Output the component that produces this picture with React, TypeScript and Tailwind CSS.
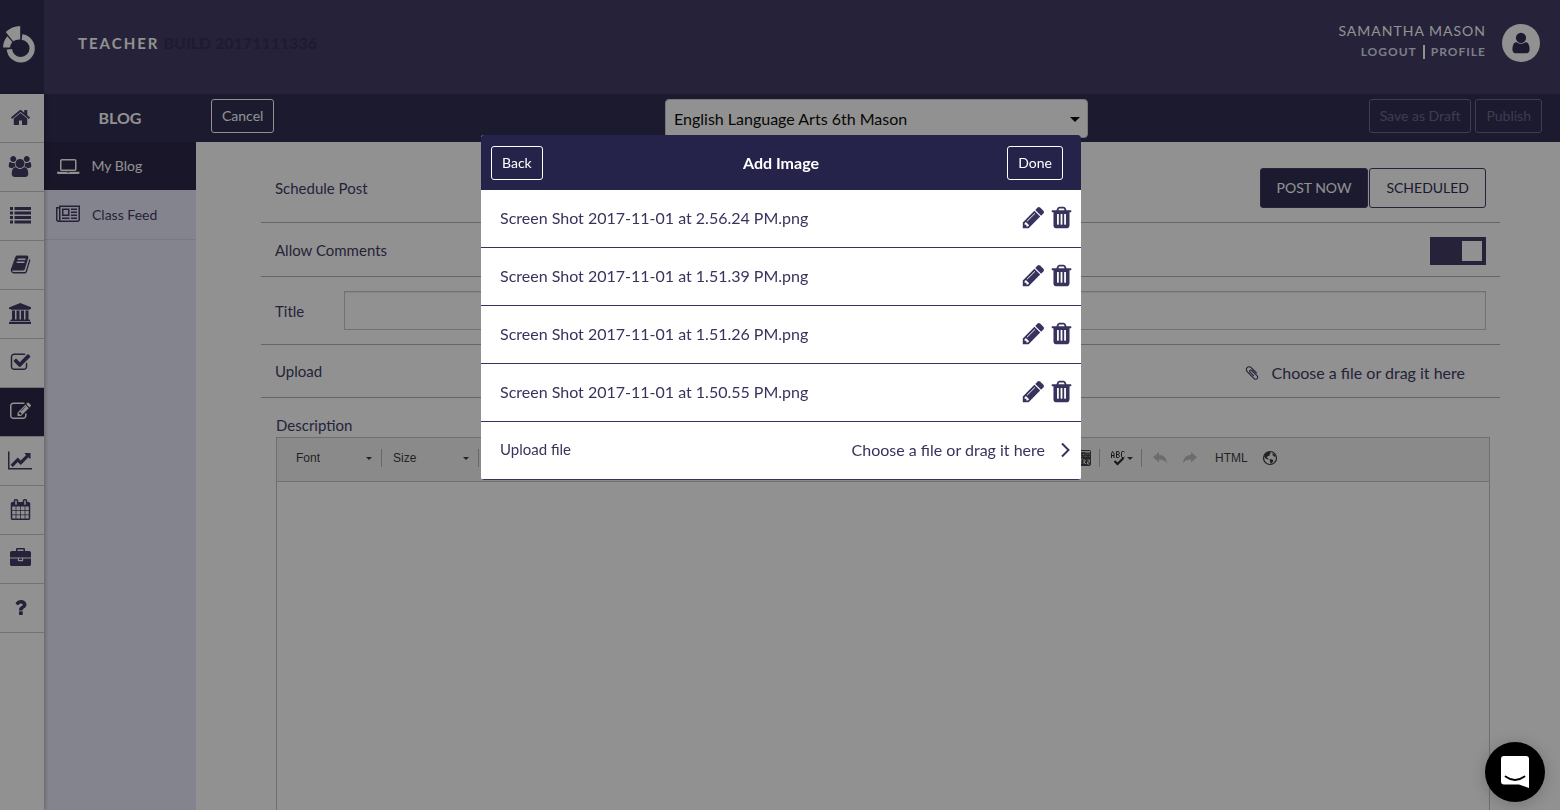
import { useState } from "react";

interface IconShape {
  path: string;
  width?: number;
}

const icons: Record<string, IconShape> = {
  home: {
    path: "M1472 992v480q0 26-19 45t-45 19h-384v-384h-256v384h-384q-26 0-45-19t-19-45v-480q0-1 .5-3t.5-3l575-474 575 474q1 2 1 6zm223-69l-62 74q-8 9-21 11h-3q-13 0-21-7l-692-577-692 577q-12 8-24 7-13-2-21-11l-62-74q-8-10-7-23.5t11-21.5l719-599q32-26 76-26t76 26l244 204v-195q0-14 9-23t23-9h192q14 0 23 9t9 23v408l219 182q10 8 11 21.5t-7 23.5z",
  },
  users: {
    width: 2048,
    path: "M657 896q-162 5-265 128h-134q-82 0-138-40.5t-56-118.5q0-353 124-353 6 0 43.5 21t97.5 42.5 119 21.5q67 0 133-23-5 37-5 66 0 139 81 256zm1071 637q0 120-73 189.5t-194 69.5h-874q-121 0-194-69.5t-73-189.5q0-53 3.5-103.5t14-109 26.5-108.5 43-97.5 62-81 85.5-53.5 111.5-20q10 0 43 21.5t73 48 107 48 135 21.5 135-21.5 107-48 73-48 43-21.5q61 0 111.5 20t85.5 53.5 62 81 43 97.5 26.5 108.5 14 109 3.5 103.5zm-1024-1277q0 106-75 181t-181 75-181-75-75-181 75-181 181-75 181 75 75 181zm704 384q0 159-112.5 271.5t-271.5 112.5-271.5-112.5-112.5-271.5 112.5-271.5 271.5-112.5 271.5 112.5 112.5 271.5zm576 225q0 78-56 118.5t-138 40.5h-134q-103-123-265-128 81-117 81-256 0-29-5-66 66 23 133 23 59 0 119-21.5t97.5-42.5 43.5-21q124 0 124 353zm-128-609q0 106-75 181t-181 75-181-75-75-181 75-181 181-75 181 75 75 181z",
  },
  list: {
    path: "M0 160h256v256h-256zM384 160h1408v256h-1408zM0 544h256v256h-256zM384 544h1408v256h-1408zM0 928h256v256h-256zM384 928h1408v256h-1408zM0 1312h256v256h-256zM384 1312h1408v256h-1408z",
  },
  book: {
    path: "M1703 478q40 57 18 129l-275 906q-19 64-76.5 107.5t-122.5 43.5h-923q-77 0-148.5-53.5t-99.5-131.5q-24-67-2-127 0-4 3-27t4-37q1-8-3-21.5t-3-19.5q2-11 8-21t16.5-23.5 16.5-23.5q23-38 45-91.5t30-91.5q3-10 .5-30t-.5-28q3-11 17-28t17-23q21-36 42-92t25-90q1-9-2.5-32t.5-28q4-13 22-30.5t22-22.5q19-26 42.5-84.5t27.5-96.5q1-8-3-25.5t-2-26.5q2-8 9-18t18-23 17-21q8-12 16.5-30.5t15-35 16-36 19.5-32 26.5-23.5 36-11.5 47.5 5.5l-1 3q38-9 51-9h761q74 0 114 56t18 130l-274 906q-36 119-71.5 153.5t-128.5 34.5h-869q-27 0-38 15-11 16-1 43 24 70 144 70h923q29 0 56-15.5t35-41.5l300-987q7-22 5-57 38 15 59 43zm-1064 2q-4 13 2 22.5t20 9.5h608q13 0 25.5-9.5t16.5-22.5l21-64q4-13-2-22.5t-20-9.5h-608q-13 0-25.5 9.5t-16.5 22.5zm-83 256q-4 13 2 22.5t20 9.5h608q13 0 25.5-9.5t16.5-22.5l21-64q4-13-2-22.5t-20-9.5h-608q-13 0-25.5 9.5t-16.5 22.5z",
  },
  university: {
    width: 1920,
    path: "M960 0l960 384v128h-128q0 26-20.5 45t-48.5 19h-1526q-28 0-48.5-19t-20.5-45h-128v-128zm-704 640h256v768h128v-768h256v768h128v-768h256v768h128v-768h256v768h59q28 0 48.5 19t20.5 45v64h-1664v-64q0-26 20.5-45t48.5-19h59v-768zm1595 960q28 0 48.5 19t20.5 45v128h-1920v-128q0-26 20.5-45t48.5-19h1782z",
  },
  check: {
    path: "M1472 930v318q0 119-84.5 203.5t-203.5 84.5h-832q-119 0-203.5-84.5t-84.5-203.5v-832q0-119 84.5-203.5t203.5-84.5h832q63 0 117 25 15 7 18 23 3 17-9 29l-49 49q-10 10-23 10-3 0-9-2-23-6-45-6h-832q-66 0-113 47t-47 113v832q0 66 47 113t113 47h832q66 0 113-47t47-113v-254q0-13 9-22l64-64q10-10 23-10 6 0 12 3 20 8 20 29zm231-489l-814 814q-24 24-57 24t-57-24l-430-430q-24-24-24-57t24-57l110-110q24-24 57-24t57 24l263 263 647-647q24-24 57-24t57 24l110 110q24 24 24 57t-24 57z",
  },
  edit: {
    path: "M888 1184l116-116-152-152-116 116v56h96v96h56zm440-720q-16-16-33 1l-350 350q-17 17-1 33t33-1l350-350q17-17 1-33zm80 594v190q0 119-84.5 203.5t-203.5 84.5h-832q-119 0-203.5-84.5t-84.5-203.5v-832q0-119 84.5-203.5t203.5-84.5h832q63 0 117 25 15 7 18 23 3 17-9 29l-49 49q-14 14-32 8-23-6-45-6h-832q-66 0-113 47t-47 113v832q0 66 47 113t113 47h832q66 0 113-47t47-113v-126q0-13 9-22l64-64q15-15 35-7t20 29zm-96-738l288 288-672 672h-288v-288zm444 132l-92 92-288-288 92-92q28-28 68-28t68 28l152 152q28 28 28 68t-28 68z",
  },
  chart: {
    width: 2048,
    path: "M2048 1536v128h-2048v-1536h128v1408h1920zm-128-1248v435q0 21-19.5 29.5t-35.5-7.5l-121-121-633 633q-10 10-23 10t-23-10l-233-233-416 416-192-192 585-585q10-10 23-10t23 10l233 233 464-464-121-121q-16-16-7.5-35.5t29.5-19.5h435q14 0 23 9t9 23z",
  },
  calendar: {
    path: "M192 1664h288v-288h-288v288zm352 0h320v-288h-320v288zm-352-352h288v-320h-288v320zm352 0h320v-320h-320v320zm-352-384h288v-288h-288v288zm736 736h320v-288h-320v288zm-384-736h320v-288h-320v288zm768 736h288v-288h-288v288zm-384-352h320v-320h-320v320zm-352-864v-288q0-13-9.5-22.5t-22.5-9.5h-64q-13 0-22.5 9.5t-9.5 22.5v288q0 13 9.5 22.5t22.5 9.5h64q13 0 22.5-9.5t9.5-22.5zm736 864h288v-320h-288v320zm-384-384h320v-288h-320v288zm384 0h288v-288h-288v288zm32-480v-288q0-13-9.5-22.5t-22.5-9.5h-64q-13 0-22.5 9.5t-9.5 22.5v288q0 13 9.5 22.5t22.5 9.5h64q13 0 22.5-9.5t9.5-22.5zm384-64v1280q0 52-38 90t-90 38h-1408q-52 0-90-38t-38-90v-1280q0-52 38-90t90-38h128v-96q0-66 47-113t113-47h64q66 0 113 47t47 113v96h384v-96q0-66 47-113t113-47h64q66 0 113 47t47 113v96h128q52 0 90 38t38 90z",
  },
  briefcase: {
    path: "M640 256h512v-128h-512v128zm1152 640v480q0 66-47 113t-113 47h-1472q-66 0-113-47t-47-113v-480h672v160q0 26 19 45t45 19h320q26 0 45-19t19-45v-160h672zm-768 0v128h-256v-128h256zm768-480v384h-1792v-384q0-66 47-113t113-47h352v-160q0-40 28-68t68-28h576q40 0 68 28t28 68v160h352q66 0 113 47t47 113z",
  },
  question: {
    path: "M1088 1256v240q0 16-12 28t-28 12h-240q-16 0-28-12t-12-28v-240q0-16 12-28t28-12h240q16 0 28 12t12 28zm316-600q0 54-15.5 101t-35 76.5-55 59.5-57.5 43.5-61 35.5q-41 23-68.5 65t-27.5 67q0 17-12 32.5t-28 15.5h-240q-15 0-25.5-18.5t-10.5-37.5v-45q0-83 65-156.5t143-108.5q59-27 84-56t25-76q0-42-46.5-74t-107.5-32q-65 0-108 29-35 25-107 115-13 16-31 16-12 0-25-8l-164-125q-13-10-15.5-25t5.5-28q160-266 464-266 80 0 161 31t146 83 106 127.5 41 158.5z",
  },
  laptop: {
    width: 1920,
    path: "M416 1280q-66 0-113-47t-47-113v-704q0-66 47-113t113-47h1088q66 0 113 47t47 113v704q0 66-47 113t-113 47h-1088zm-32-864v704q0 13 9.5 22.5t22.5 9.5h1088q13 0 22.5-9.5t9.5-22.5v-704q0-13-9.5-22.5t-22.5-9.5h-1088q-13 0-22.5 9.5t-9.5 22.5zm1376 928h160v96q0 40-47 68t-113 28h-1600q-66 0-113-28t-47-68v-96h1760zm-720 96q16 0 16-16t-16-16h-160q-16 0-16 16t16 16h160z",
  },
  newspaper: {
    width: 2048,
    path: "M1024 512h-384v384h384v-384zm128 640v128h-640v-128h640zm0-768v640h-640v-640h640zm640 768v128h-512v-128h512zm0-256v128h-512v-128h512zm0-256v128h-512v-128h512zm0-256v128h-512v-128h512zm-1536 960v-960h-128v960q0 26 19 45t45 19 45-19 19-45zm1664 0v-1088h-1536v1088q0 33-11 64h1483q26 0 45-19t19-45zm128-1216v1216q0 80-56 136t-136 56h-1664q-80 0-136-56t-56-136v-1088h256v-128h1792z",
  },
  pencil: {
    path: "M491 1536l91-91-235-235-91 91v107h128v128h107zm523-928q0-22-22-22-10 0-17 7l-542 542q-7 7-7 17 0 22 22 22 10 0 17-7l542-542q7-7 7-17zm-54-192l416 416-832 832h-416v-416zm683 96q0 53-37 90l-166 166-416-416 166-165q36-38 90-38 53 0 91 38l235 234q37 39 37 91z",
  },
  trash: {
    path: "M704 1376v-704q0-14-9-23t-23-9h-64q-14 0-23 9t-9 23v704q0 14 9 23t23 9h64q14 0 23-9t9-23zm256 0v-704q0-14-9-23t-23-9h-64q-14 0-23 9t-9 23v704q0 14 9 23t23 9h64q14 0 23-9t9-23zm256 0v-704q0-14-9-23t-23-9h-64q-14 0-23 9t-9 23v704q0 14 9 23t23 9h64q14 0 23-9t9-23zm-544-992h448l-48-117q-7-9-17-11h-317q-10 2-17 11zm928 32v64q0 14-9 23t-23 9h-96v948q0 83-47 143.5t-113 60.5h-832q-66 0-113-58.5t-47-141.5v-952h-96q-14 0-23-9t-9-23v-64q0-14 9-23t23-9h309l70-167q15-37 54-63t79-26h320q40 0 79 26t54 63l70 167h309q14 0 23 9t9 23z",
  },
  user: {
    path: "M1536 1399q0 109-62.5 187t-150.5 78h-854q-88 0-150.5-78t-62.5-187q0-85 8.5-160.5t31.5-152 58.5-131 94-89 134.5-34.5q131 128 313 128t313-128q76 0 134.5 34.5t94 89 58.5 131 31.5 152 8.5 160.5zm-256-887q0 159-112.5 271.5t-271.5 112.5-271.5-112.5-112.5-271.5 112.5-271.5 271.5-112.5 271.5 112.5 112.5 271.5z",
  },
  paperclip: {
    path: "M1596 1385q0 117-79 196t-196 79q-135 0-235-100l-777-776q-113-115-113-271 0-159 110-270t269-111q158 0 273 113l605 606q10 10 10 22 0 16-30.5 46.5t-46.5 30.5q-13 0-23-10l-606-607q-79-77-181-77-106 0-179 75t-73 181q0 105 76 181l776 777q63 63 145 63 64 0 106-42t42-106q0-82-63-145l-581-581q-26-24-60-24-29 0-48 19t-19 48q0 32 25 59l410 410q10 10 10 22 0 16-31 47t-47 31q-12 0-22-10l-410-410q-63-61-63-149 0-82 57-139t139-57q88 0 149 63l581 581q100 98 100 235z",
  },
};

function Icon({ name, className }: { name: string; className: string }) {
  const { path, width = 1792 } = icons[name];

  return (
    <svg
      viewBox={`0 0 ${width} 1792`}
      className={`shrink-0 fill-current ${className}`}
      aria-hidden="true"
    >
      <path d={path} />
    </svg>
  );
}

const railItems = [
  { icon: "home", label: "Home" },
  { icon: "users", label: "Classes" },
  { icon: "list", label: "Lists" },
  { icon: "book", label: "Gradebook" },
  { icon: "university", label: "School" },
  { icon: "check", label: "Attendance" },
  { icon: "edit", label: "Blog", active: true },
  { icon: "chart", label: "Reports" },
  { icon: "calendar", label: "Calendar" },
  { icon: "briefcase", label: "Resources" },
  { icon: "question", label: "Help" },
];

const files = [
  "Screen Shot 2017-11-01 at 2.56.24 PM.png",
  "Screen Shot 2017-11-01 at 1.51.39 PM.png",
  "Screen Shot 2017-11-01 at 1.51.26 PM.png",
  "Screen Shot 2017-11-01 at 1.50.55 PM.png",
];

function Logo() {
  return (
    <svg viewBox="0 0 34 38" className="h-[38px] w-[34px]" aria-hidden="true">
      <path
        d="M20 12A11.400 11.400 0 1 1 7.400 24.200"
        fill="none"
        stroke="#fff"
        strokeWidth="5.300"
      />
      <path d="M3.700 7Q10 1 18.200 1V14.500Q14 14.300 11.200 16.200Z" fill="#fff" />
      <path d="M5.300 11.300L10.300 17Q8.500 19.300 8 22.500H1.200Q1 16.500 5.300 11.300Z" fill="#fff" />
    </svg>
  );
}

function Header() {
  return (
    <header className="flex h-[94px] bg-[#38335d] text-white">
      <a
        href="#home"
        aria-label="Home"
        className="flex w-11 items-center bg-[#26234b] pb-1.5 pl-0.5"
      >
        <Logo />
      </a>

      <div className="flex flex-1 items-center pb-2 pl-[34px] text-[15px]">
        <span className="font-bold tracking-[2px]">TEACHER</span>
        <span className="ml-1 text-base font-bold text-[#2a264c]">
          BUILD 20171111336
        </span>
      </div>

      <div className="flex items-center gap-4 pr-5 pb-2">
        <div className="pb-[3px] text-right">
          <p className="text-sm leading-5 tracking-[1px]">SAMANTHA MASON</p>
          <div className="flex items-center justify-end text-xs leading-[21px] font-bold tracking-[1px] text-[#dcdaf0]">
            <a href="#logout">LOGOUT</a>
            <span className="mx-1.5 h-3.5 w-0.5 bg-white" />
            <a href="#profile">PROFILE</a>
          </div>
        </div>

        <span className="flex size-[38px] items-center justify-center rounded-full bg-white text-[#26234b]">
          <Icon name="user" className="size-6" />
        </span>
      </div>
    </header>
  );
}

function Rail() {
  return (
    <nav
      aria-label="Main"
      className="z-10 w-11 bg-white shadow-[1px_0_4px_rgba(0,0,0,0.3)]"
    >
      {railItems.map((item) => (
        <a
          key={item.icon}
          href={`#${item.icon}`}
          aria-label={item.label}
          className={`flex h-[49px] items-center justify-center border-b border-[#c4c4c4] pr-1 pb-0.5 ${
            item.active ? "bg-[#201d3e] text-white" : "text-[#38335d]"
          }`}
        >
          <Icon name={item.icon} className="h-[21px]" />
        </a>
      ))}
    </nav>
  );
}

function ActionBar() {
  return (
    <div className="flex h-12 bg-[#26234b] text-white">
      <h1 className="w-[152px] text-center text-base leading-[48px] font-bold">
        BLOG
      </h1>

      <div className="flex flex-1 items-start pt-[5px] pr-[18px] pl-[15px] text-sm">
        <div className="flex-1">
          <button type="button" className="h-[34px] rounded-[3px] border border-white px-2.5">
            Cancel
          </button>
        </div>

        <div className="relative w-[423px]">
          <select
            aria-label="Class"
            className="h-[39px] w-full appearance-none rounded border border-[#d0d0d0] bg-white px-2 text-base text-black"
          >
            <option>English Language Arts 6th Mason</option>
          </select>
          <span className="pointer-events-none absolute top-[18px] right-2 border-x-5 border-t-5 border-x-transparent border-t-black" />
        </div>

        <div className="flex flex-1 justify-end gap-1 text-[#676487]">
          <button type="button" className="h-[34px] rounded-[3px] border border-[#676487] px-2.5">
            Save as Draft
          </button>
          <button type="button" className="h-[34px] rounded-[3px] border border-[#676487] px-2.5">
            Publish
          </button>
        </div>
      </div>
    </div>
  );
}

function Sidebar() {
  return (
    <nav aria-label="Blog" className="w-[152px] bg-[#e8e8f9] text-sm">
      <a
        href="#my-blog"
        className="flex h-12 items-center bg-[#201d3e] pl-[13px] text-white"
      >
        <Icon name="laptop" className="h-[21px]" />
        <span className="ml-3">My Blog</span>
      </a>
      <a
        href="#class-feed"
        className="flex h-[50px] items-center border-b border-[#d2d2e2] pl-3 text-[#38335d]"
      >
        <Icon name="newspaper" className="h-[21px]" />
        <span className="ml-3">Class Feed</span>
      </a>
    </nav>
  );
}

function Caret() {
  return <span className="border-x-3 border-t-3 border-x-transparent border-t-[#333]" />;
}

function Separator() {
  return <span className="h-[18px] w-px bg-[#b4b4b4]" />;
}

function Toolbar() {
  return (
    <div
      className="
        flex h-11 items-center
        border-b border-[#c0c0c0]
        bg-[#f3f3f3]
        pb-[3px] pl-[19px]
        font-['Liberation_Sans',sans-serif] text-xs text-[#333]
      "
    >
      <button type="button" className="mr-[9px] flex w-[76px] items-center justify-between">
        Font
        <Caret />
      </button>
      <Separator />
      <button type="button" className="mr-[9px] ml-[11px] flex w-[76px] items-center justify-between">
        Size
        <Caret />
      </button>
      <Separator />

      <div className="ml-[596px] flex items-center">
        <button type="button" aria-label="YouTube">
          <svg viewBox="0 0 16 16" className="size-4" aria-hidden="true">
            <rect width="16" height="16" rx="2" fill="#3a3a3a" />
            <rect x="1" y="1" width="14" height="6" fill="#ddd" />
            <path d="M7 3h3v3H7zM12 2.5V6h2V2.5" fill="none" stroke="#222" strokeWidth="1.4" />
            <path d="M6 9v5M4.5 9h3M9 9v5M9 12l2-2M9 12l2 2M12.500 10h2v2h-2v2h2" fill="none" stroke="#ddd" />
          </svg>
        </button>
        <span className="w-2" />
        <Separator />
        <button type="button" aria-label="Spell check" className="ml-2.5 flex items-center gap-px">
          <svg viewBox="0 0 16 16" className="size-4" fill="none" aria-hidden="true">
            <path
              d="M1.500 8V3.500L2.500 1.500L4 3.500V8M1.500 5.500H4M6.500 1.500V7.500H8.500L9.500 6.500L8.500 4.500L9.500 3L8.500 1.500H6.500M6.500 4.500H8.500M14.500 2L13.500 1.500H12L11.500 2.500V6.500L12 7.500H13.500L14.500 7"
              stroke="#222"
            />
            <path d="M4.500 11L7.500 14L13.500 8" stroke="#222" strokeWidth="2.200" />
          </svg>
          <Caret />
        </button>
        <span className="w-2" />
        <Separator />
        <button type="button" aria-label="Undo" className="ml-[11px] text-[#bbb]">
          <svg viewBox="0 0 14 12" className="h-3 w-3.5 fill-current" aria-hidden="true">
            <path d="M6 0V3C10 3 13.500 5 14 11.500C12 8.500 9.500 7.500 6 7.500V10.500L0 5.200Z" />
          </svg>
        </button>
        <button type="button" aria-label="Redo" className="ml-4 text-[#bbb]">
          <svg viewBox="0 0 14 12" className="h-3 w-3.5 fill-current" aria-hidden="true">
            <path d="M8 0V3C4 3 .5 5 0 11.500C2 8.500 4.500 7.500 8 7.500V10.500L14 5.200Z" />
          </svg>
        </button>
        <button type="button" className="ml-[18px]">
          HTML
        </button>
        <button type="button" aria-label="Preview" className="ml-3.5">
          <svg viewBox="0 0 16 16" className="size-4" aria-hidden="true">
            <circle cx="8" cy="8" r="6.500" fill="none" stroke="#333" strokeWidth="1.200" />
            <path
              d="M3 4L5.500 2L8 2L9 3.500L7.500 4L8 5.500L6 6L4.500 7.500L6.500 8.500L6 9.500L3.500 8.500L2 6.500ZM10.500 3L13 5L13.500 7L12 6.500L10.500 5ZM7.500 9L10.500 9.500L11.500 11L9.500 13.500H8.500Z"
              fill="#333"
            />
          </svg>
        </button>
      </div>
    </div>
  );
}

function PostForm() {
  const [comments, setComments] = useState(true);

  return (
    <main className="flex flex-1 flex-col bg-white pr-[60px] pl-[65px] text-[15px] text-[#38335d]">
      <div className="flex h-[81px] items-center justify-between border-b border-[#a8b3b8] px-3.5 pt-3">
        <span>Schedule Post</span>
        <div className="flex gap-px text-sm">
          <button
            type="button"
            className="h-10 rounded-[3px] border border-[#38335d] bg-[#26234b] px-4 text-white"
          >
            POST NOW
          </button>
          <button
            type="button"
            className="h-10 rounded-[3px] border border-[#38335d] px-4 text-[#26234b]"
          >
            SCHEDULED
          </button>
        </div>
      </div>

      <div className="flex h-[54px] items-center justify-between border-b border-[#a8b3b8] px-3.5 pt-0.5">
        <label htmlFor="comments">Allow Comments</label>
        <input
          id="comments"
          type="checkbox"
          checked={comments}
          onChange={() => setComments(!comments)}
          className="
            flex h-7 w-14 appearance-none
            bg-[#38335d] p-1
            before:size-5 before:bg-white
            checked:before:ml-auto
          "
        />
      </div>

      <div className="flex h-[68px] items-center border-b border-[#a8b3b8] px-3.5">
        <label htmlFor="title" className="w-[69px] pt-0.5">
          Title
        </label>
        <input
          id="title"
          type="text"
          className="h-[39px] flex-1 border border-[#c4c4c4] px-3 shadow-[inset_0_1px_1px_rgba(0,0,0,0.08)]"
        />
      </div>

      <div className="flex h-[53px] items-center justify-between border-b border-[#a8b3b8] pr-[35px] pl-3.5">
        <span>Upload</span>
        <label className="flex items-center pt-1 text-base">
          <Icon name="paperclip" className="mr-3 size-4" />
          Choose a file or drag it here
          <input type="file" className="sr-only" />
        </label>
      </div>

      <div className="flex flex-1 flex-col pt-4 pr-2.5 pl-[15px]">
        <label htmlFor="description" className="pb-px leading-[22px]">
          Description
        </label>
        <div className="flex flex-1 flex-col border border-b-0 border-[#c0c0c0]">
          <Toolbar />
          <textarea id="description" className="flex-1 resize-none p-3 outline-none" />
        </div>
      </div>
    </main>
  );
}

function AddImageDialog() {
  return (
    <div className="fixed inset-0 z-20 flex items-start justify-center bg-[#101010]/46 pt-[135px] pl-0.5">
      <div
        role="dialog"
        aria-modal="true"
        aria-labelledby="dialog-title"
        className="w-[600px] overflow-hidden rounded-[3px] bg-white text-[#38335d]"
      >
        <div className="grid h-[55px] grid-cols-[1fr_auto_1fr] items-center bg-[#26234b] px-2.5 text-sm text-white">
          <div>
            <button type="button" className="h-[34px] rounded-[3px] border border-white px-2.5">
              Back
            </button>
          </div>
          <h2 id="dialog-title" className="text-base font-bold">
            Add Image
          </h2>
          <div className="pr-2 text-right">
            <button type="button" className="h-[34px] rounded-[3px] border border-white px-2.5">
              Done
            </button>
          </div>
        </div>

        <ul>
          {files.map((file) => (
            <li
              key={file}
              className="flex h-[58px] items-center border-b border-[#38335d] pr-[7px] pb-0.5 pl-[19px] text-base"
            >
              <span className="flex-1">{file}</span>
              <div className="flex gap-[3px] pb-px">
                <button type="button" aria-label={`Edit ${file}`}>
                  <Icon name="pencil" className="size-[25px]" />
                </button>
                <button type="button" aria-label={`Delete ${file}`}>
                  <Icon name="trash" className="size-[25px]" />
                </button>
              </div>
            </li>
          ))}
        </ul>

        <label className="flex h-[58px] items-center border-b border-[#38335d] pr-[11px] pb-0.5 pl-[19px] text-base">
          <span className="flex-1 text-[15px]">Upload file</span>
          Choose a file or drag it here
          <svg
            viewBox="0 0 10 16"
            className="ml-[15px] h-4 w-2.5"
            fill="none"
            stroke="currentColor"
            strokeWidth="2"
            aria-hidden="true"
          >
            <path d="M2 1.500L8.500 8L2 14.500" />
          </svg>
          <input type="file" className="sr-only" />
        </label>
      </div>
    </div>
  );
}

function ChatLauncher() {
  return (
    <button
      type="button"
      aria-label="Open chat"
      className="
        fixed right-[15px] bottom-2 z-30
        flex size-[60px] items-center justify-center
        rounded-full bg-black
        shadow-[0_2px_16px_rgba(0,0,0,0.2)]
      "
    >
      <svg viewBox="0 0 28 32" className="h-8 w-7" aria-hidden="true">
        <path d="M3 0H25Q28 0 28 3V32Q23 30 18 28.500H3Q0 28.500 0 25.500V3Q0 0 3 0Z" fill="#fff" />
        <path
          d="M4.500 20.500Q14 27.500 23.500 20.500"
          fill="none"
          stroke="#000"
          strokeWidth="1.800"
          strokeLinecap="round"
        />
      </svg>
    </button>
  );
}

export default function App() {
  return (
    <div className="flex h-screen flex-col overflow-hidden font-[Lato,sans-serif]">
      <Header />

      <div className="flex flex-1">
        <Rail />
        <div className="flex flex-1 flex-col">
          <ActionBar />
          <div className="flex flex-1">
            <Sidebar />
            <PostForm />
          </div>
        </div>
      </div>

      <AddImageDialog />
      <ChatLauncher />
    </div>
  );
}
